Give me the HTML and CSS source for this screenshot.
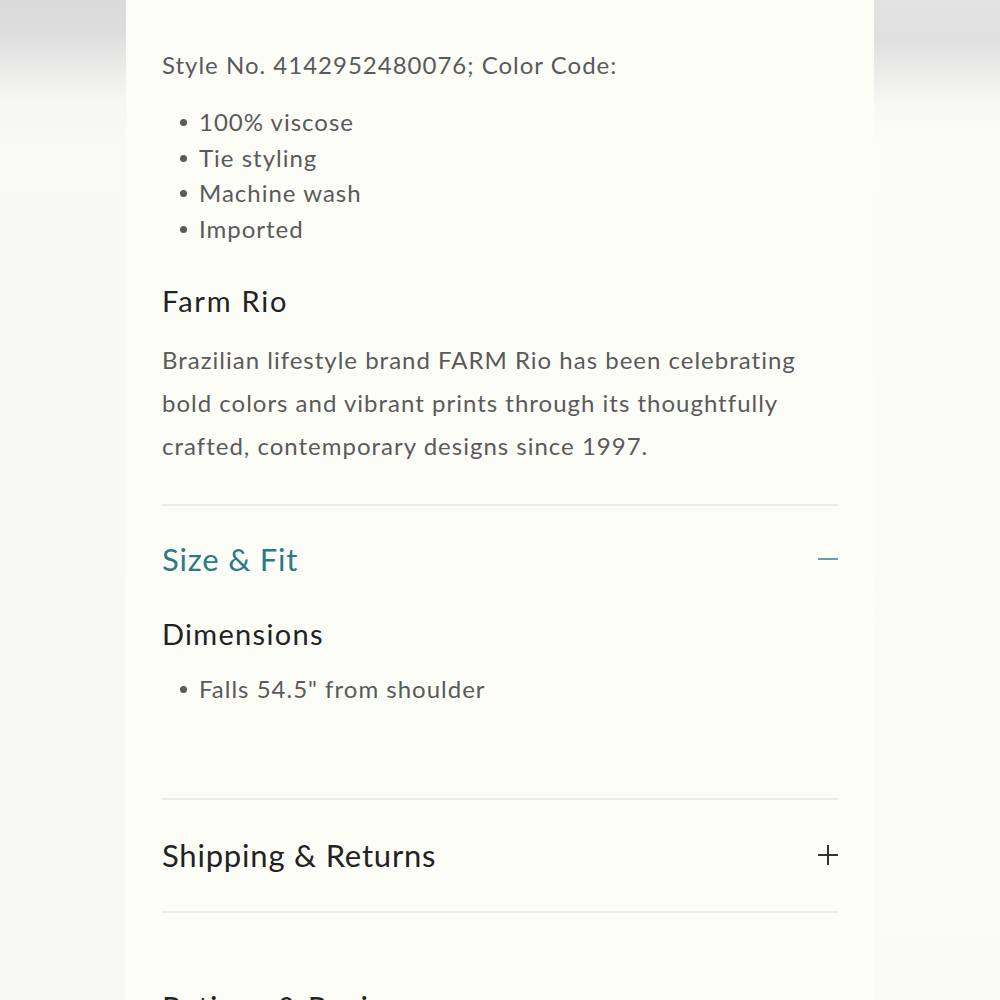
FILE: index.html
```html
<!DOCTYPE html>
<html lang="en">
<head>
<meta charset="utf-8">
<title>Product details</title>
<link rel="stylesheet" href="styles.css">
</head>
<body>
<div class="stage">
  <div class="side side-left"></div>
  <main class="card">
    <p class="style-no">Style No. 4142952480076; Color Code:</p>
    <ul class="bullets">
      <li>100% viscose</li>
      <li>Tie styling</li>
      <li>Machine wash</li>
      <li>Imported</li>
    </ul>
    <h3 class="brand">Farm Rio</h3>
    <p class="about">Brazilian lifestyle brand FARM Rio has been celebrating bold colors and vibrant prints through its thoughtfully crafted, contemporary designs since 1997.</p>

    <section class="acc open">
      <div class="acc-head">
        <h2 class="acc-title teal">Size &amp; Fit</h2>
        <span class="minus"></span>
      </div>
      <div class="acc-body">
        <h3 class="sub">Dimensions</h3>
        <ul class="bullets">
          <li>Falls 54.5" from shoulder</li>
        </ul>
      </div>
    </section>

    <section class="acc">
      <div class="acc-head">
        <h2 class="acc-title">Shipping &amp; Returns</h2>
        <span class="plus"></span>
      </div>
    </section>

    <section class="acc last">
      <div class="acc-head">
        <h2 class="acc-title">Ratings &amp; Reviews</h2>
      </div>
    </section>
  </main>
  <div class="side side-right"></div>
</div>
</body>
</html>
```
FILE: styles.css
```css
html, body {
  margin: 0;
  padding: 0;
  height: 1000px;
  overflow: hidden;
}
body {
  font-family: "Lato", "Noto Sans", sans-serif;
  background: #fbfbf8;
}
.stage {
  display: flex;
  height: 1000px;
}
.side {
  flex: 0 0 126px;
  background:
    linear-gradient(180deg, #dadada 0px, #dedede 35px, #ececeb 70px, #f6f6f3 100px, #f9f9f6 140px, #f8f8f5 1000px);
}
.side-right {
  background:
    linear-gradient(180deg, #e3e3e4 0px, #dfdfdf 40px, #ededec 75px, #f8f8f4 105px, #fbfbf7 140px, #fafaf6 1000px);
}
.card {
  flex: 1;
  background: #fdfdf8;
  padding: 44px 36px 0 36px;
  color: #555;
  overflow: hidden;
}
.style-no {
  margin: 0;
  font-size: 24px;
  line-height: 42px;
  letter-spacing: 1px;
  color: #5a5a5a;
}
.bullets {
  margin: 18px 0 0 0;
  padding: 0 0 0 37px;
  list-style: none;
}
.bullets li {
  position: relative;
  font-size: 24px;
  line-height: 35.7px;
  letter-spacing: 1px;
  color: #5a5a5a;
}
.bullets li::before {
  content: "";
  position: absolute;
  left: -19px;
  top: 15px;
  width: 7px;
  height: 7px;
  border-radius: 50%;
  background: #5a5a5a;
}
.brand {
  margin: 34px 0 0 0;
  font-size: 29px;
  line-height: 40px;
  font-weight: 400;
  letter-spacing: 1.8px;
  color: #222;
}
.about {
  margin: 17px 0 37px 0;
  font-size: 24px;
  line-height: 43px;
  letter-spacing: 1px;
  color: #5a5a5a;
}
.acc {
  border-top: 2px solid #ebebe8;
}
.acc-head {
  display: flex;
  align-items: center;
  justify-content: space-between;
  height: 111px;
}
.acc-title {
  margin: 0;
  font-size: 31px;
  font-weight: 400;
  letter-spacing: 0.8px;
  color: #222;
}
.acc-title.teal {
  color: #2b7a88;
}
.open .acc-head {
  height: 107px;
}
.acc-body {
  padding-bottom: 91px;
  margin-top: 1px;
}
.sub {
  margin: 0;
  font-size: 29px;
  line-height: 40px;
  font-weight: 400;
  letter-spacing: 1.3px;
  color: #222;
}
.acc-body .bullets {
  margin-top: 17px;
}
.minus {
  width: 20px;
  height: 2px;
  background: #6a9aa4;
}
.plus {
  position: relative;
  width: 20px;
  height: 20px;
}
.plus::before, .plus::after {
  content: "";
  position: absolute;
  background: #333;
}
.plus::before {
  left: 0;
  top: 9px;
  width: 20px;
  height: 2px;
}
.plus::after {
  left: 9px;
  top: 0;
  width: 2px;
  height: 20px;
}
.acc.last .acc-head {
  height: auto;
  padding-top: 75px;
}
```
